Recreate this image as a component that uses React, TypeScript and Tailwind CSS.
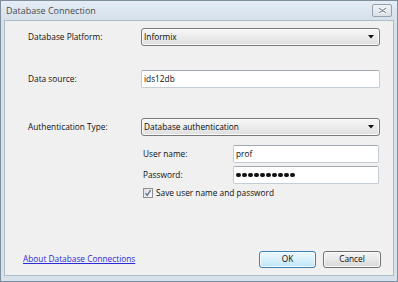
import React from "react"

const font = { fontFamily: '"Open Sans", "Liberation Sans", Arial, sans-serif' }

function Combo({ value }: { value: string }) {
  return (
    <div className="flex h-[18px] w-[239px] items-center justify-between rounded-[3px] border border-[#7a7a7a] bg-linear-to-b from-[#f7f7f7] via-[#ececec] to-[#dedede] pl-[2px] pr-[5px] shadow-[inset_0_0_0_1px_#fbfbfb]">
      <span className="text-[8.3px] leading-none text-[#0a0a0a]">{value}</span>
      <svg width="6" height="4" viewBox="0 0 6 4">
        <path d="M0 0H6L3 3.5Z" fill="#111" />
      </svg>
    </div>
  )
}

function TextBox({ width, children }: { width: string; children: React.ReactNode }) {
  return (
    <div
      className={`flex h-[18px] ${width} items-center rounded-[2px] border border-[#c4ccd6] border-t-[#a3a9b1] bg-white pl-[2px] text-[8.3px] leading-none text-[#0a0a0a]`}
    >
      {children}
    </div>
  )
}

export default function App() {
  return (
    <div
      className="flex h-[282px] w-[398px] flex-col overflow-hidden border border-[#7f8e9d] bg-[#d7e1eb]"
      style={font}
    >
      {/* title bar */}
      <div className="flex h-[18px] shrink-0 items-center justify-between bg-linear-to-b from-[#e6edf5] to-[#d6e1ec] pl-[5px] pr-[5px]">
        <span className="text-[9px] leading-none text-[#4a4a4a]">Database Connection</span>
        <div className="flex h-[13px] w-[20px] items-center justify-center rounded-[2px] border border-[#95a1ad] bg-linear-to-b from-[#eef2f6] to-[#d9e1e9]">
          <svg width="9" height="7" viewBox="0 0 9 7">
            <path d="M1 1L8 6M8 1L1 6" stroke="#ffffff" strokeWidth="3" strokeLinecap="round" />
            <path d="M1.2 1.2L7.8 5.8M7.8 1.2L1.2 5.8" stroke="#8a949e" strokeWidth="1.4" strokeLinecap="round" />
          </svg>
        </div>
      </div>

      {/* client area */}
      <div className="mx-[3px] mb-[5px] mt-[1px] flex flex-1 flex-col border border-[#aebbc8] bg-[#f0f0f0] pb-[7px] pl-[23px] pr-[12px] pt-[7px] text-[8.3px] leading-none text-[#0f0f0f]">
        <div className="flex items-center">
          <span className="w-[113px]">Database Platform:</span>
          <Combo value="Informix" />
        </div>

        <div className="mt-[24px] flex items-center">
          <span className="w-[113px]">Data source:</span>
          <TextBox width="w-[239px]">ids12db</TextBox>
        </div>

        <div className="mt-[30px] flex items-center">
          <span className="w-[113px]">Authentication Type:</span>
          <Combo value="Database authentication" />
        </div>

        <div className="ml-[115px] mt-[9px] flex flex-col">
          <div className="flex items-center">
            <span className="w-[90px]">User name:</span>
            <TextBox width="w-[146px]">prof</TextBox>
          </div>
          <div className="mt-[3px] flex items-center">
            <span className="w-[90px]">Password:</span>
            <TextBox width="w-[146px]">
              <div className="flex gap-[1.5px]">
                {Array.from({ length: 10 }).map((_, i) => (
                  <span key={i} className="h-[4.5px] w-[4.5px] rounded-full bg-[#111]" />
                ))}
              </div>
            </TextBox>
          </div>
          <div className="mt-[4px] flex items-center gap-[3px]">
            <div className="flex h-[10px] w-[10px] items-center justify-center border border-[#8e8f8f] bg-linear-to-br from-[#dedede] to-[#fbfbfb]">
              <svg width="8" height="8" viewBox="0 0 8 8">
                <path d="M1.5 4.2L3.2 6.3L6.6 1.2" stroke="#5a6f9c" strokeWidth="1.3" fill="none" />
              </svg>
            </div>
            <span>Save user name and password</span>
          </div>
        </div>

        <div className="mt-auto flex items-center justify-between">
          <span className="-ml-[5px] text-[#2b2bd9] underline">About Database Connections</span>
          <div className="flex gap-[7px]">
            <button className="flex h-[17px] w-[57px] items-center justify-center rounded-[3px] border border-[#3c7fb1] bg-linear-to-b from-[#ecf7fd] via-[#d9f0fc] to-[#bfe4f8] text-[8.3px] leading-none text-[#0a0a0a] shadow-[inset_0_0_0_1px_#f4fbff]">
              OK
            </button>
            <button className="flex h-[17px] w-[58px] items-center justify-center rounded-[3px] border border-[#707070] bg-linear-to-b from-[#f4f4f4] via-[#e8e8e8] to-[#d6d6d6] text-[8.3px] leading-none text-[#0a0a0a] shadow-[inset_0_0_0_1px_#fbfbfb]">
              Cancel
            </button>
          </div>
        </div>
      </div>
    </div>
  )
}
